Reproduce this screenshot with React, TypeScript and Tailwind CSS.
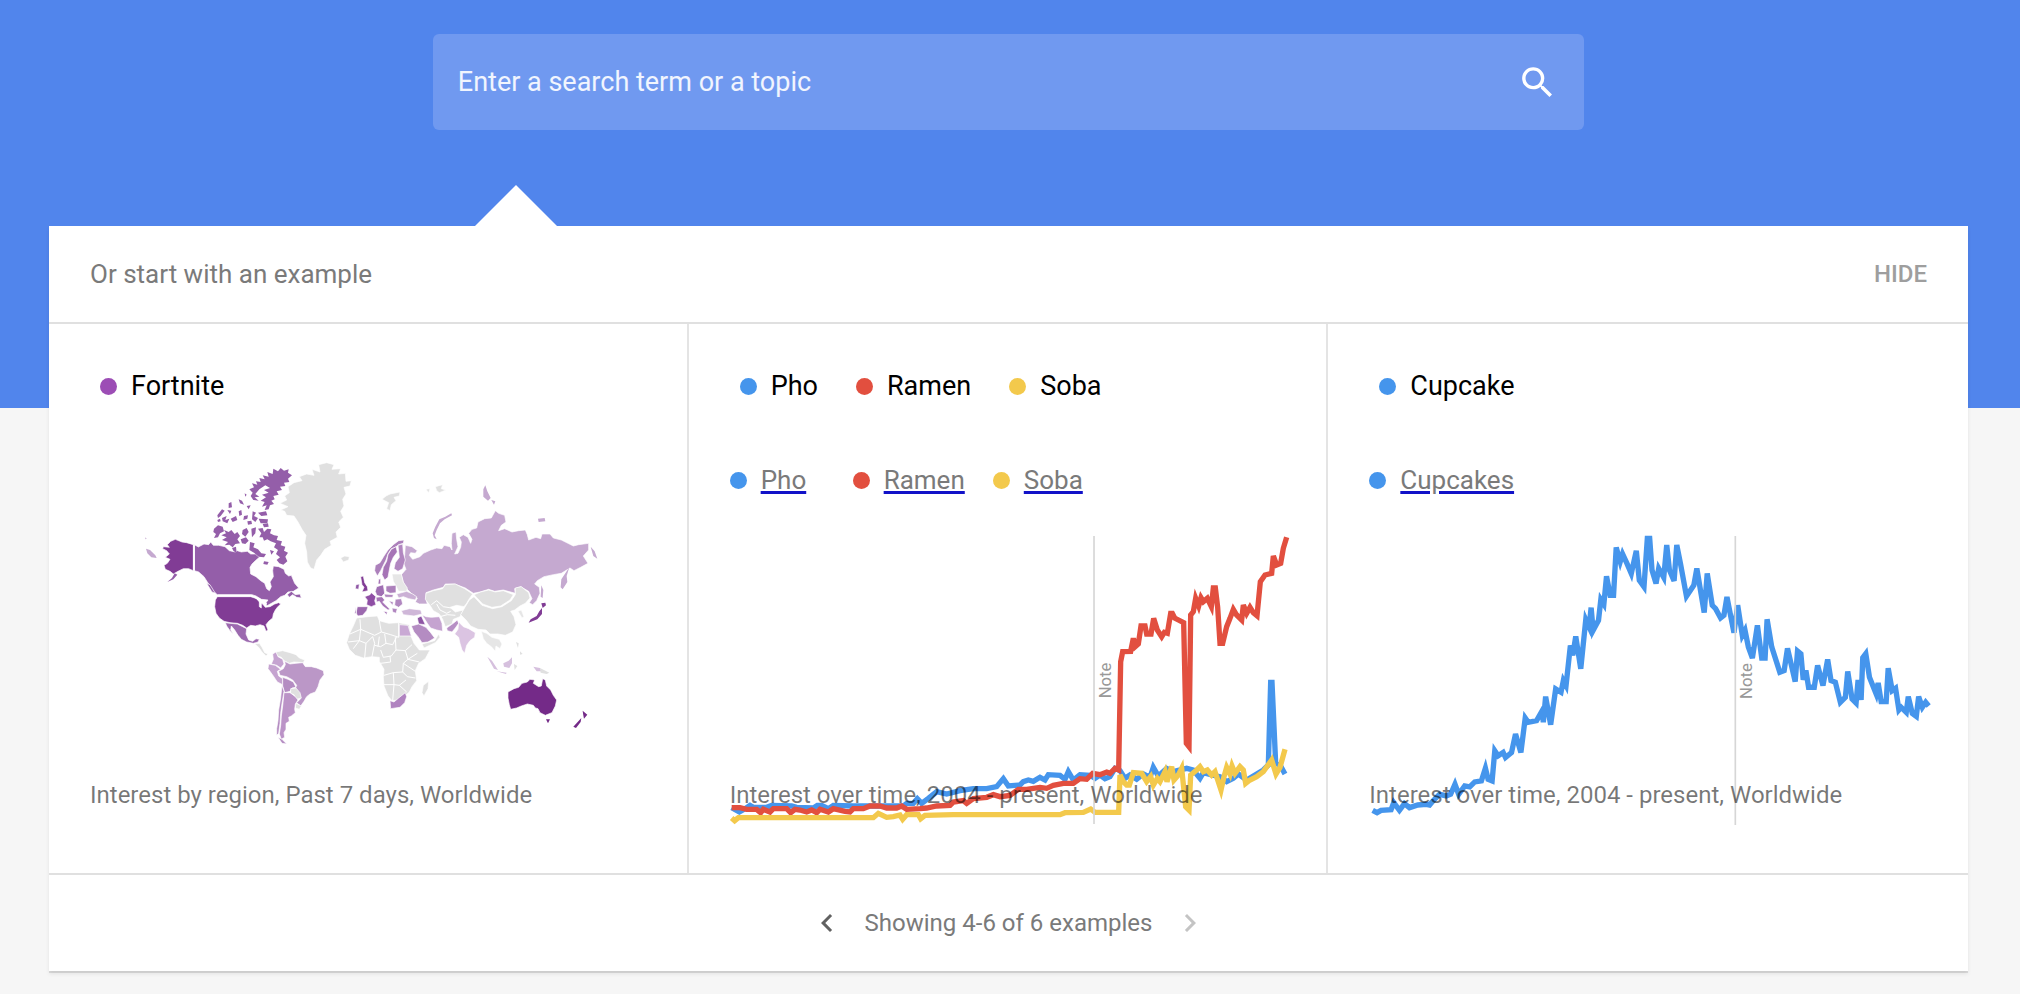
import React from 'react';

const BLUE = '#4595ec';
const RED = '#e24f3f';
const YELLOW = '#f3c94c';

type Term = { name: string; dot: string };

const Dot: React.FC<{ color: string }> = ({ color }) => (
  <span className={`block w-[17px] h-[17px] rounded-full shrink-0 ${color}`}></span>
);

const Terms: React.FC<{ terms: Term[] }> = ({ terms }) => (
  <div className="flex items-center h-8 pl-[10px] gap-[38px]">
    {terms.map((t) => (
      <div key={t.name} className="flex items-center gap-[14px]">
        <Dot color={t.dot} />
        <span className="text-[27px] leading-8 text-black">{t.name}</span>
      </div>
    ))}
  </div>
);

const LinkLegend: React.FC<{ terms: Term[] }> = ({ terms }) => (
  <div className="flex items-center h-8 mt-[62px]">
    {terms.map((t) => (
      <div key={t.name} className="flex items-center gap-[14px] min-w-[123px] pr-7">
        <Dot color={t.dot} />
        <a
          href="#"
          className="text-[26px] leading-8 text-[#7a7a7a] underline decoration-[#1212c8] decoration-[3px] underline-offset-[2px]"
        >
          {t.name}
        </a>
      </div>
    ))}
  </div>
);

const Caption: React.FC<{ children: React.ReactNode }> = ({ children }) => (
  <p className="absolute left-[41px] bottom-[62px] text-2xl leading-8 text-black/54 whitespace-nowrap">{children}</p>
);

type Series = { color: string; points: string };

const LineChart: React.FC<{ series: Series[]; start: number; noteX: number; label: string }> = ({
  series,
  start,
  noteX,
  label,
}) => (
  <svg
    viewBox={`${start} 30 1667 900`}
    className="block w-full h-auto mt-[34px] overflow-visible"
    role="img"
    aria-label={label}
  >
    {series.map((s) => (
      <polyline key={s.color} points={s.points} fill="none" stroke={s.color} strokeWidth="16" />
    ))}
    <line x1={noteX} y1="48" x2={noteX} y2="912" stroke="#d6d6d6" strokeWidth="5" />
    <text
      transform={`translate(${noteX + 50} 535) rotate(-90)`}
      fontSize="50"
      fill="#999999"
    >
      Note
    </text>
  </svg>
);

const noodles: Series[] = [
  {
    color: BLUE,
    points:
      '35,863 58,876 75,866 90,856 100,862 140,862 155,856 215,858 230,862 280,864 292,856 305,856 325,866 340,856 400,858 550,858 560,850 580,850 592,836 605,850 625,835 650,815 680,822 720,812 760,806 800,806 830,800 850,776 865,798 900,795 910,785 925,780 940,784 960,772 975,780 985,764 1020,766 1035,778 1045,755 1060,780 1080,764 1110,766 1125,775 1140,765 1155,776 1170,770 1185,745 1200,752 1215,775 1230,765 1250,778 1270,762 1290,772 1300,742 1315,768 1340,745 1360,755 1400,745 1420,750 1440,775 1450,758 1475,765 1500,770 1520,785 1540,775 1555,762 1580,780 1610,762 1630,750 1645,735 1652,487 1656,487 1667,730 1680,735 1695,762',
  },
  {
    color: RED,
    points:
      '35,863 60,863 80,868 110,868 122,878 130,868 150,876 160,866 200,866 212,878 225,868 240,870 260,876 275,870 290,878 300,868 325,876 340,866 375,874 390,876 400,866 430,866 450,858 480,858 500,864 530,864 545,858 560,868 600,866 620,864 650,858 690,856 700,846 730,842 740,850 760,836 800,832 820,824 840,830 870,826 895,808 920,808 960,802 980,805 1000,796 1030,790 1060,790 1080,776 1100,778 1118,760 1140,764 1160,756 1170,760 1185,745 1196,750 1202,425 1208,395 1232,394 1240,355 1246,380 1255,372 1263,318 1275,318 1280,342 1293,342 1301,295 1312,330 1325,350 1333,337 1342,340 1352,280 1357,280 1364,294 1391,308 1399,670 1407,680 1412,285 1420,275 1427,235 1436,258 1443,233 1450,245 1462,235 1474,260 1480,204 1486,204 1493,262 1500,370 1508,370 1520,320 1530,295 1540,268 1550,285 1565,300 1570,255 1580,280 1590,262 1600,278 1611,287 1621,185 1635,165 1655,160 1660,108 1670,135 1682,130 1690,85 1700,52',
  },
  {
    color: YELLOW,
    points:
      '35,894 44,902 55,893 460,893 475,880 500,892 520,890 540,885 548,898 560,884 595,884 602,896 615,886 700,884 900,884 1020,884 1035,878 1090,877 1112,867 1125,877 1196,877 1200,765 1210,785 1220,795 1228,795 1240,758 1265,760 1280,785 1292,770 1300,795 1312,775 1320,785 1335,755 1341,785 1355,740 1362,780 1375,765 1385,745 1397,860 1407,870 1412,765 1430,750 1440,740 1450,755 1462,750 1475,765 1485,755 1503,810 1512,770 1520,742 1530,762 1536,738 1545,760 1560,740 1570,750 1577,790 1590,780 1610,770 1630,755 1655,720 1668,762 1680,742 1695,688',
  },
];

const cupcake: Series[] = [
  {
    color: BLUE,
    points:
      '65,868 78,875 90,868 120,866 128,845 145,868 160,848 175,860 200,852 225,850 235,852 245,840 265,820 285,825 298,820 311,790 322,820 340,795 355,798 370,783 390,780 402,742 410,775 422,780 430,690 440,705 455,695 462,710 480,695 492,640 508,695 521,592 530,605 555,600 572,570 575,605 582,528 597,612 612,505 628,515 635,480 643,495 656,375 663,405 672,348 687,445 702,298 712,320 718,262 724,330 740,300 747,238 756,252 764,168 775,225 785,225 793,82 805,125 812,102 825,130 838,160 853,92 862,180 876,200 886,55 893,55 900,150 912,190 920,145 935,172 944,75 952,150 966,182 974,75 985,130 1003,228 1025,195 1034,145 1056,277 1065,160 1080,255 1090,265 1105,293 1115,285 1124,230 1145,337 1156,255 1170,345 1178,330 1188,380 1200,413 1215,315 1228,413 1238,413 1244,297 1258,380 1282,455 1295,450 1305,384 1328,483 1335,392 1345,400 1352,478 1360,450 1368,500 1385,500 1395,435 1411,495 1425,417 1435,480 1448,485 1463,545 1478,530 1485,453 1498,535 1510,547 1516,478 1525,538 1530,412 1539,400 1550,470 1570,520 1576,487 1585,543 1600,543 1606,443 1618,510 1628,503 1638,568 1645,560 1660,575 1666,528 1678,578 1690,587 1697,528 1708,560 1718,545 1727,556',
  },
];

const WorldMap: React.FC = () => (
  <svg
    viewBox="-120 0 1667 900"
    className="block w-full h-auto mt-12 overflow-visible"
    role="img"
    aria-label="Interest by region"
  >
    <g stroke="#ffffff" strokeWidth="2" strokeLinejoin="round">
      {/* Greenland, Iceland */}
      <path
        fill="#e0e0e0"
        d="M450 160L470 150L464 138L478 128L474 110L492 98L516 92L508 80L530 72L552 76L546 58L570 66L566 44L590 38L612 44L606 58L632 56L626 72L646 70L648 94L664 92L660 108L642 112L648 132L638 148L642 168L632 184L640 202L626 216L632 232L618 246L622 262L600 274L604 286L584 298L572 316L560 330L552 358L542 354L532 336L530 306L524 280L528 256L516 238L504 216L492 198L470 196L464 184L452 180L474 170Z"
      />
      <path fill="#e0e0e0" d="M632 324L644 318L658 320L656 330L640 336Z" />
      {/* Alaska */}
      <path
        fill="#813c95"
        d="M190 284L170 278L156 276L136 268L122 274L112 284L118 292L100 290L98 296L110 302L118 312L106 322L120 328L112 340L102 346L106 358L120 364L130 372L144 364L160 356L176 356L190 362Z"
      />
      <path fill="#945ea9" stroke="none" d="M134 370L142 374L130 388L112 396L126 384Z" />
      <path fill="#c5a9d0" stroke="none" d="M46 262L50 266L46 268ZM48 296L60 300L76 316L80 324L64 322L52 310Z" />
      {/* Canada */}
      <path
        fill="#945ea9"
        d="M193 284L205 291L222 282L236 284L242 276L250 286L266 286L285 290L298 302L316 306L322 302L334 306L352 304L362 312L376 312L388 322L376 332L366 342L360 352L362 372L378 380L392 392L404 400L410 416L418 422L424 410L420 396L430 380L428 362L430 348L446 350L462 358L466 370L476 378L484 376L494 400L506 414L490 424L474 426L464 436L452 440L438 452L424 460L410 468L408 458L414 450L394 448L378 438L366 434L262 434L250 424L240 408L232 396L222 380L206 366L193 362Z"
      />
      <path fill="#945ea9" d="M472 434L484 424L496 434L510 432L514 444L500 442L488 434L478 442ZM230 400L240 404L256 430L246 426Z" />
      {/* Arctic islands */}
      <g fill="#945ea9" stroke="none">
        <path d="M372 112L366 100L382 104L378 94L392 96L388 84L404 88L398 76L416 80L412 66L428 72L430 56L444 64L452 54L462 62L476 58L474 68L486 76L474 86L478 96L462 98L466 108L450 110L456 120L440 124L446 134L430 138L434 148L424 152L432 162L420 166L416 178L404 180L410 166L396 170L404 156L392 152L408 142L396 134L416 128L402 120L420 114L406 106L388 118L376 132L388 140L374 142L386 152L370 150L362 138L368 128L358 118Z" />
        <path d="M252 236L264 226L278 230L282 244L270 250L264 262L252 264L258 252L250 246Z" />
        <path d="M282 240L296 246L304 240L314 252L322 246L330 258L322 268L330 280L316 282L308 292L298 284L284 286L294 276L276 270L290 262L274 256L288 250ZM306 294L318 290L320 310L310 302Z" />
        <path d="M262 196L276 178L284 182L272 198L264 204ZM276 204L290 198L286 210L298 206L292 220L278 214ZM302 206L318 198L322 210L308 216ZM296 160L304 156L306 172L296 174ZM326 148L336 152L342 164L330 160ZM292 180L304 182L300 192Z" />
        <path d="M342 198L354 196L352 206L340 210ZM368 184L378 188L372 198L384 204L376 216L366 208ZM386 206L414 208L412 220L392 220ZM384 188L408 184L412 196L394 198ZM338 240L350 234L356 246L346 260L336 252ZM364 236L378 232L376 250L366 262ZM350 168L362 166L356 178Z" />
        <path d="M326 184L334 180L336 194L328 198ZM262 210L270 206L272 214L264 216ZM398 222L414 220L416 230L402 232ZM352 214L364 212L366 222L354 224ZM332 268L348 262L356 272L346 282L336 280ZM344 130L350 134L346 140Z" />
        <path d="M384 236L398 234L402 246L412 236L424 238L420 250L432 256L444 258L440 270L456 274L452 286L466 290L462 302L474 308L466 320L472 334L460 344L448 340L440 330L450 322L438 312L444 300L432 292L438 280L422 274L412 268L402 272L398 262L388 262L394 250Z" />
        <path d="M360 276L374 280L370 292L384 298L394 310L408 312L402 322L386 320L372 308L358 300ZM402 334L416 336L412 344L400 342ZM420 300L432 304L424 314Z" />
      </g>
      {/* United States */}
      <path
        fill="#813c95"
        d="M262 440L362 440L380 446L388 456L398 462L406 472L420 470L434 462L446 458L452 462L442 472L436 480L430 492L428 504L416 514L408 524L414 540L408 544L402 528L390 524L376 528L362 526L350 534L338 526L322 520L300 518L282 514L268 504L258 490L254 470L256 450Z"
      />
      <path fill="none" strokeWidth="5" d="M192 284V362M262 437H364" />
      {/* Great Lakes */}
      <path fill="#ffffff" d="M374 442L390 446L396 452L384 450ZM388 456L394 456L394 474L388 470ZM400 452L410 460L404 466Z" />
      {/* Mexico, Central America */}
      <path fill="#9c69af" d="M286 518L300 520L322 522L338 530L350 536L348 552L356 570L368 574L378 566L388 568L384 576L370 580L350 576L334 568L324 556L314 540L304 528L302 540L310 552L300 542L290 528Z" />
      <path fill="#e0e0e0" d="M374 582L388 580L396 592L404 608L414 612L408 618L396 606L386 592Z" />
      {/* South America */}
      <path fill="#e0e0e0" d="M438 606L458 602L480 608L498 614L508 624L524 630L520 638L492 636L478 640L462 632L454 622L442 618Z" />
      <path fill="#c5a3d0" d="M428 612L438 606L444 620L458 628L462 642L452 654L440 646L424 642L430 628Z" />
      <path fill="#c5a3d0" d="M416 642L436 646L452 658L442 664L446 678L458 686L458 704L442 696L430 678L420 664L414 656Z" />
      <path fill="#b48cc2" d="M458 682L474 688L490 696L498 712L486 714L480 724L464 728L458 708Z" />
      <path
        fill="#bb97c7"
        d="M464 634L480 642L498 640L518 638L526 650L544 650L560 654L580 662L582 674L570 690L564 710L556 726L540 732L530 740L522 754L512 768L500 758L512 746L508 732L496 716L500 706L488 690L470 680L450 676L446 664L460 656L466 644Z"
      />
      <path fill="#e0e0e0" d="M482 716L498 714L510 728L514 744L500 748L492 734L482 730ZM498 760L514 768L508 778L496 774Z" />
      <path
        fill="#bb93c7"
        d="M462 728L480 728L496 740L504 750L496 762L494 778L496 788L484 798L476 802L478 814L468 820L468 838L462 848L464 862L454 868L448 852L452 826L454 798L458 768Z"
      />
      <path fill="#b48cc2" d="M456 706L462 724L456 760L452 790L450 820L446 850L440 856L440 836L444 812L446 780L452 744ZM444 862L456 868L470 882L456 880Z" />

      <g transform="translate(630 0)">
        {/* Svalbard and other small northern islands */}
        <path fill="#e0e0e0" d="M126 148L138 138L150 132L180 126L178 138L162 142L168 152L154 164L150 182L140 176L146 158ZM258 118L270 116L266 128ZM286 110L308 104L304 116L318 120L298 128L290 122Z" />
        {/* Russia */}
        <path
          fill="#c5a9d0"
          d="M196 286L216 290L232 302L226 310L212 308L208 316L218 328L240 320L250 310L272 300L290 294L306 296L312 286L330 290L336 300L334 280L336 250L348 246L350 268L354 290L344 312L354 310L362 292L364 276L358 262L370 254L384 262L392 280L396 268L386 250L396 238L410 234L414 216L434 206L454 204L466 182L476 190L494 196L498 216L484 226L476 242L494 236L516 246L536 242L556 240L562 254L566 270L588 262L602 266L606 252L630 252L640 264L664 270L684 280L700 288L716 284L746 280L746 300L730 318L744 340L722 352L702 362L690 354L664 370L640 374L612 380L592 392L584 402L598 412L600 430L590 452L578 464L568 458L576 446L566 424L542 410L524 416L526 430L490 420L464 424L446 418L420 426L400 430L376 414L344 402L316 402L310 412L280 420L258 428L258 448L262 462L238 462L226 456L232 444L216 432L200 416L190 398L184 374L198 358L190 338L194 316Z"
        />
        <path stroke="none" fill="#c5a9d0" d="M334 190L336 196L314 208L300 220L290 240L284 256L290 268L282 264L278 250L286 230L298 208L316 200ZM430 118L436 106L442 124L452 144L444 152L430 140ZM454 150L466 154L462 164ZM594 206L614 204L616 214L596 216ZM752 290L764 304L772 326L760 318ZM688 352L680 378L682 396L668 418L662 412L664 388L676 370ZM604 406L610 420L608 444L602 440Z" />
        {/* Scandinavia */}
        <path fill="#ac80bb" d="M160 284L176 272L192 270L190 280L176 284L166 292L154 296L144 312L138 330L130 346L122 362L112 378L104 362L106 346L120 338L132 318L144 300Z" />
        <path fill="#a674b6" d="M154 298L168 290L172 306L160 322L152 340L148 360L144 382L134 390L126 374L130 352L140 334L144 314Z" />
        <path fill="#b187c0" d="M174 286L188 282L190 308L196 330L188 356L174 364L162 356L166 338L178 322Z" />
        {/* Baltics, Belarus, Ukraine */}
        <path fill="#e6e6e6" d="M156 372L184 372L190 396L202 414L200 424L176 424L168 408L160 394Z" />
        <path fill="#cbb0d5" d="M170 432L200 424L218 432L230 440L226 450L206 446L190 440L176 444Z" />
        {/* Western and central Europe */}
        <path fill="#813c95" d="M62 380L70 378L74 398L82 410L84 422L66 426L72 412L66 404Z" />
        <path fill="#8f57a5" d="M48 404L58 402L56 418L46 416Z" />
        <path fill="#8f4fa5" d="M74 440L90 434L94 428L108 440L104 452L108 464L94 470L80 464L82 450Z" />
        <path fill="#9c69af" d="M52 470L84 470L80 482L68 496L54 498L48 490ZM48 472L50 492L44 490Z" />
        <path fill="#a06fb3" d="M110 410L130 404L134 430L124 440L110 436L106 424Z" />
        <path fill="#ac80bb" d="M138 408L168 406L168 428L150 430L138 424Z" />
        <path fill="#a674b6" d="M108 442L126 440L134 450L128 456L142 470L150 478L144 480L128 468L118 454L110 456ZM130 484L142 486L140 494ZM116 388L122 386L122 402L114 402Z" />
        <path fill="#b187c0" d="M132 432L160 434L158 442L136 442ZM166 448L184 446L188 462L176 472L164 466ZM156 474L172 476L168 490L158 486ZM146 452L160 456L158 466Z" />
        {/* Turkey, Middle East */}
        <path fill="#cfb7d8" d="M184 482L208 476L242 480L246 492L222 498L190 494Z" />
        <path fill="#8f57a5" d="M232 504L244 498L256 524L236 522Z" />
        <path fill="#c5a3d0" d="M246 494L258 500L274 502L298 500L306 520L308 544L290 540L272 534L262 520Z" />
        <path fill="#b48cc2" d="M214 528L236 522L258 532L272 548L284 564L264 576L246 578L234 560L222 546Z" />
        <path fill="#e0e0e0" d="M246 582L284 572L296 552L300 562L286 578L252 594Z" />
        {/* Central and east Asia */}
        <path
          fill="#e0e0e0"
          d="M258 430L280 422L308 416L316 404L346 402L374 416L398 432L388 446L380 460L372 470L350 466L330 472L346 486L370 480L360 500L340 508L336 522L316 530L308 508L298 492L280 482L270 466L256 448Z"
        />
        <path fill="none" strokeWidth="3" d="M274 464L290 452L310 470L334 474M290 462L300 480L320 490L332 484M300 500L322 494L346 496" />
        <path fill="#e0e0e0" d="M402 434L422 426L446 420L466 426L490 422L520 434L510 450L482 468L456 472L428 462Z" />
        <path
          fill="#e0e0e0"
          d="M376 470L388 450L402 440L426 466L458 476L486 470L514 452L526 434L526 414L544 410L566 428L570 444L556 460L540 468L524 480L512 484L522 500L528 524L518 546L496 556L474 552L450 552L438 540L414 538L392 528L378 510L362 494Z"
        />
        <path fill="#e6e6e6" d="M424 544L440 550L456 562L478 568L486 582L480 596L468 588L466 604L454 590L440 580L430 566ZM534 484L544 480L552 500L546 504Z" />
        {/* South Asia */}
        <path fill="#b78fc5" d="M320 534L340 520L352 510L356 520L346 534L336 546L322 542Z" />
        <path fill="#dbc4e2" d="M356 516L370 530L386 536L406 548L404 562L390 572L380 586L374 610L366 600L360 580L356 562L344 552L354 538Z" />
        {/* Japan */}
        <path stroke="none" fill="#813c95" d="M604 460L616 458L618 466L608 474ZM606 474L606 492L592 508L566 518L572 508L590 498L598 484Z" />
        {/* Indonesia, Philippines, Papua */}
        <path stroke="none" fill="#d6c0de" d="M442 620L456 632L474 660L462 656ZM490 640L506 632L516 622L516 640L508 654L492 650ZM470 664L500 668L498 672ZM580 650L600 654L604 664L590 664Z" />
        <path stroke="none" fill="#e0e0e0" d="M600 654L628 668L620 672L602 668ZM528 576L536 580L534 594ZM540 604L548 612L540 614ZM522 642L532 648L524 660Z" />
        {/* Africa */}
        <path
          fill="#e0e0e0"
          d="M50 504L84 500L112 498L118 512L146 520L176 518L208 524L212 556L222 580L238 600L270 600L256 626L236 640L226 662L230 692L216 710L208 726L190 742L174 750L156 752L144 738L132 708L130 682L132 658L118 634L118 622L96 620L70 624L46 616L28 598L20 578L28 552L38 532Z"
        />
        <path fill="#c9a9d4" d="M178 524L204 526L214 558L178 558Z" />
        <path fill="#b083c0" d="M150 752L162 756L176 744L196 728L200 740L194 758L180 772L152 776Z" />
        <path fill="#e0e0e0" d="M266 694L264 716L252 738L246 728L250 706Z" />
        <path
          fill="none"
          strokeWidth="3"
          d="M60 508L62 538L30 552M62 538L104 556L124 546L118 512M124 546L152 554L176 562L176 518M62 538L58 572L24 576M58 572L40 596M58 572L78 580L98 560M98 560L104 580L96 620M134 552L138 580L122 590L104 586M138 580L158 584L170 560M166 562L168 600L154 618L130 622L122 600M168 600L196 602L216 584M150 618L152 636L122 640M196 602L204 628L190 640L188 666L160 668L132 676M204 628L238 636M160 668L162 704L132 704M188 666L202 680L226 684M162 704L178 706L198 690M162 704L158 752M178 706L200 726M78 580L74 624M118 560L114 590M204 628L232 610M190 640L226 664"
        />
        {/* Australia, New Zealand */}
        <path
          fill="#742a88"
          d="M504 726L522 716L536 712L546 700L562 696L570 688L584 690L580 700L596 710L604 708L608 686L616 690L620 708L632 720L640 736L650 750L646 768L636 788L616 796L600 788L594 776L586 774L580 766L562 762L544 768L530 774L512 778L508 764L504 744Z"
        />
        <path stroke="none" fill="#742a88" d="M618 808L630 808L624 820ZM728 782L742 794L732 806L730 796ZM724 804L722 816L708 834L700 830Z" />
      </g>
    </g>
  </svg>
);

const App: React.FC = () => {
  return (
    <div className="min-h-screen bg-[#f6f6f6] font-['Roboto',sans-serif] pb-6">
      <header className="bg-[#5185ec] h-[408px] pt-[34px] pl-[49px] pr-[52px]">
        <form
          onSubmit={(e) => e.preventDefault()}
          className="flex items-center w-3/5 h-24 mx-auto pl-[25px] pr-[26px] bg-[#7099f0] rounded-md"
        >
          <input
            type="text"
            aria-label="Search term"
            placeholder="Enter a search term or a topic"
            className="flex-1 h-full bg-transparent text-[27px] text-white placeholder:text-white/90 focus:outline-none"
          />
          <button type="submit" aria-label="Search" className="text-white">
            <svg width="41" height="41" viewBox="0 0 24 24" fill="currentColor">
              <path d="M15.5 14h-.79l-.28-.27A6.47 6.47 0 0 0 16 9.5 6.5 6.5 0 1 0 9.5 16c1.61 0 3.09-.59 4.23-1.57l.27.28v.79l5 4.99L20.49 19l-4.99-5zm-6 0C7.01 14 5 11.99 5 9.5S7.01 5 9.5 5 14 7.01 14 9.5 11.99 14 9.5 14z" />
            </svg>
          </button>
        </form>
      </header>

      <main className="relative -mt-[182px] ml-[49px] mr-[52px] bg-white shadow-[0_2px_0_rgba(0,0,0,0.1),0_3px_4px_rgba(0,0,0,0.08)]">
        {/* Pointer towards the search box */}
        <svg className="absolute left-[426px] -top-[41px]" width="82" height="42" viewBox="0 0 82 42" fill="#ffffff">
          <path d="M0 42V41L41 0L82 41V42Z" />
        </svg>

        <div className="flex items-center justify-between h-[98px] px-[41px] border-b-2 border-[#e0e0e0]">
          <h2 className="text-[26px] leading-8 text-[#7a7a7a]">Or start with an example</h2>
          <button type="button" className="text-2xl leading-8 font-medium text-[#9e9e9e]">HIDE</button>
        </div>

        <div className="grid grid-cols-3 divide-x-2 divide-[#e4e4e4] border-b-2 border-[#e0e0e0]">
          <section className="relative px-[41px] pt-[46px] pb-[42px]">
            <Terms terms={[{ name: 'Fortnite', dot: 'bg-[#9c4db5]' }]} />
            <WorldMap />
            <Caption>Interest by region, Past 7 days, Worldwide</Caption>
          </section>

          <section className="relative px-[41px] pt-[46px] pb-[42px]">
            <Terms
              terms={[
                { name: 'Pho', dot: 'bg-[#4595ec]' },
                { name: 'Ramen', dot: 'bg-[#e24f3f]' },
                { name: 'Soba', dot: 'bg-[#f3c94c]' },
              ]}
            />
            <LinkLegend
              terms={[
                { name: 'Pho', dot: 'bg-[#4595ec]' },
                { name: 'Ramen', dot: 'bg-[#e24f3f]' },
                { name: 'Soba', dot: 'bg-[#f3c94c]' },
              ]}
            />
            <LineChart series={noodles} start={30} noteX={1122} label="Pho, Ramen and Soba over time" />
            <Caption>Interest over time, 2004 - present, Worldwide</Caption>
          </section>

          <section className="relative px-[41px] pt-[46px] pb-[42px]">
            <Terms terms={[{ name: 'Cupcake', dot: 'bg-[#4595ec]' }]} />
            <LinkLegend terms={[{ name: 'Cupcakes', dot: 'bg-[#4595ec]' }]} />
            <LineChart series={cupcake} start={54} noteX={1149} label="Cupcakes over time" />
            <Caption>Interest over time, 2004 - present, Worldwide</Caption>
          </section>
        </div>

        <footer className="flex items-center justify-center h-24">
          <button type="button" aria-label="Previous examples" className="text-[#616161]">
            <svg width="36" height="36" viewBox="0 0 24 24" fill="currentColor">
              <path d="M15.41 7.41 14 6l-6 6 6 6 1.41-1.41L10.83 12z" />
            </svg>
          </button>
          <span className="mx-5 text-2xl leading-8 text-[#7a7a7a]">Showing 4-6 of 6 examples</span>
          <button type="button" aria-label="Next examples" className="text-[#c4c4c4]" disabled>
            <svg width="36" height="36" viewBox="0 0 24 24" fill="currentColor">
              <path d="M10 6 8.59 7.41 13.17 12l-4.58 4.59L10 18l6-6z" />
            </svg>
          </button>
        </footer>
      </main>
    </div>
  );
};

export default App;
